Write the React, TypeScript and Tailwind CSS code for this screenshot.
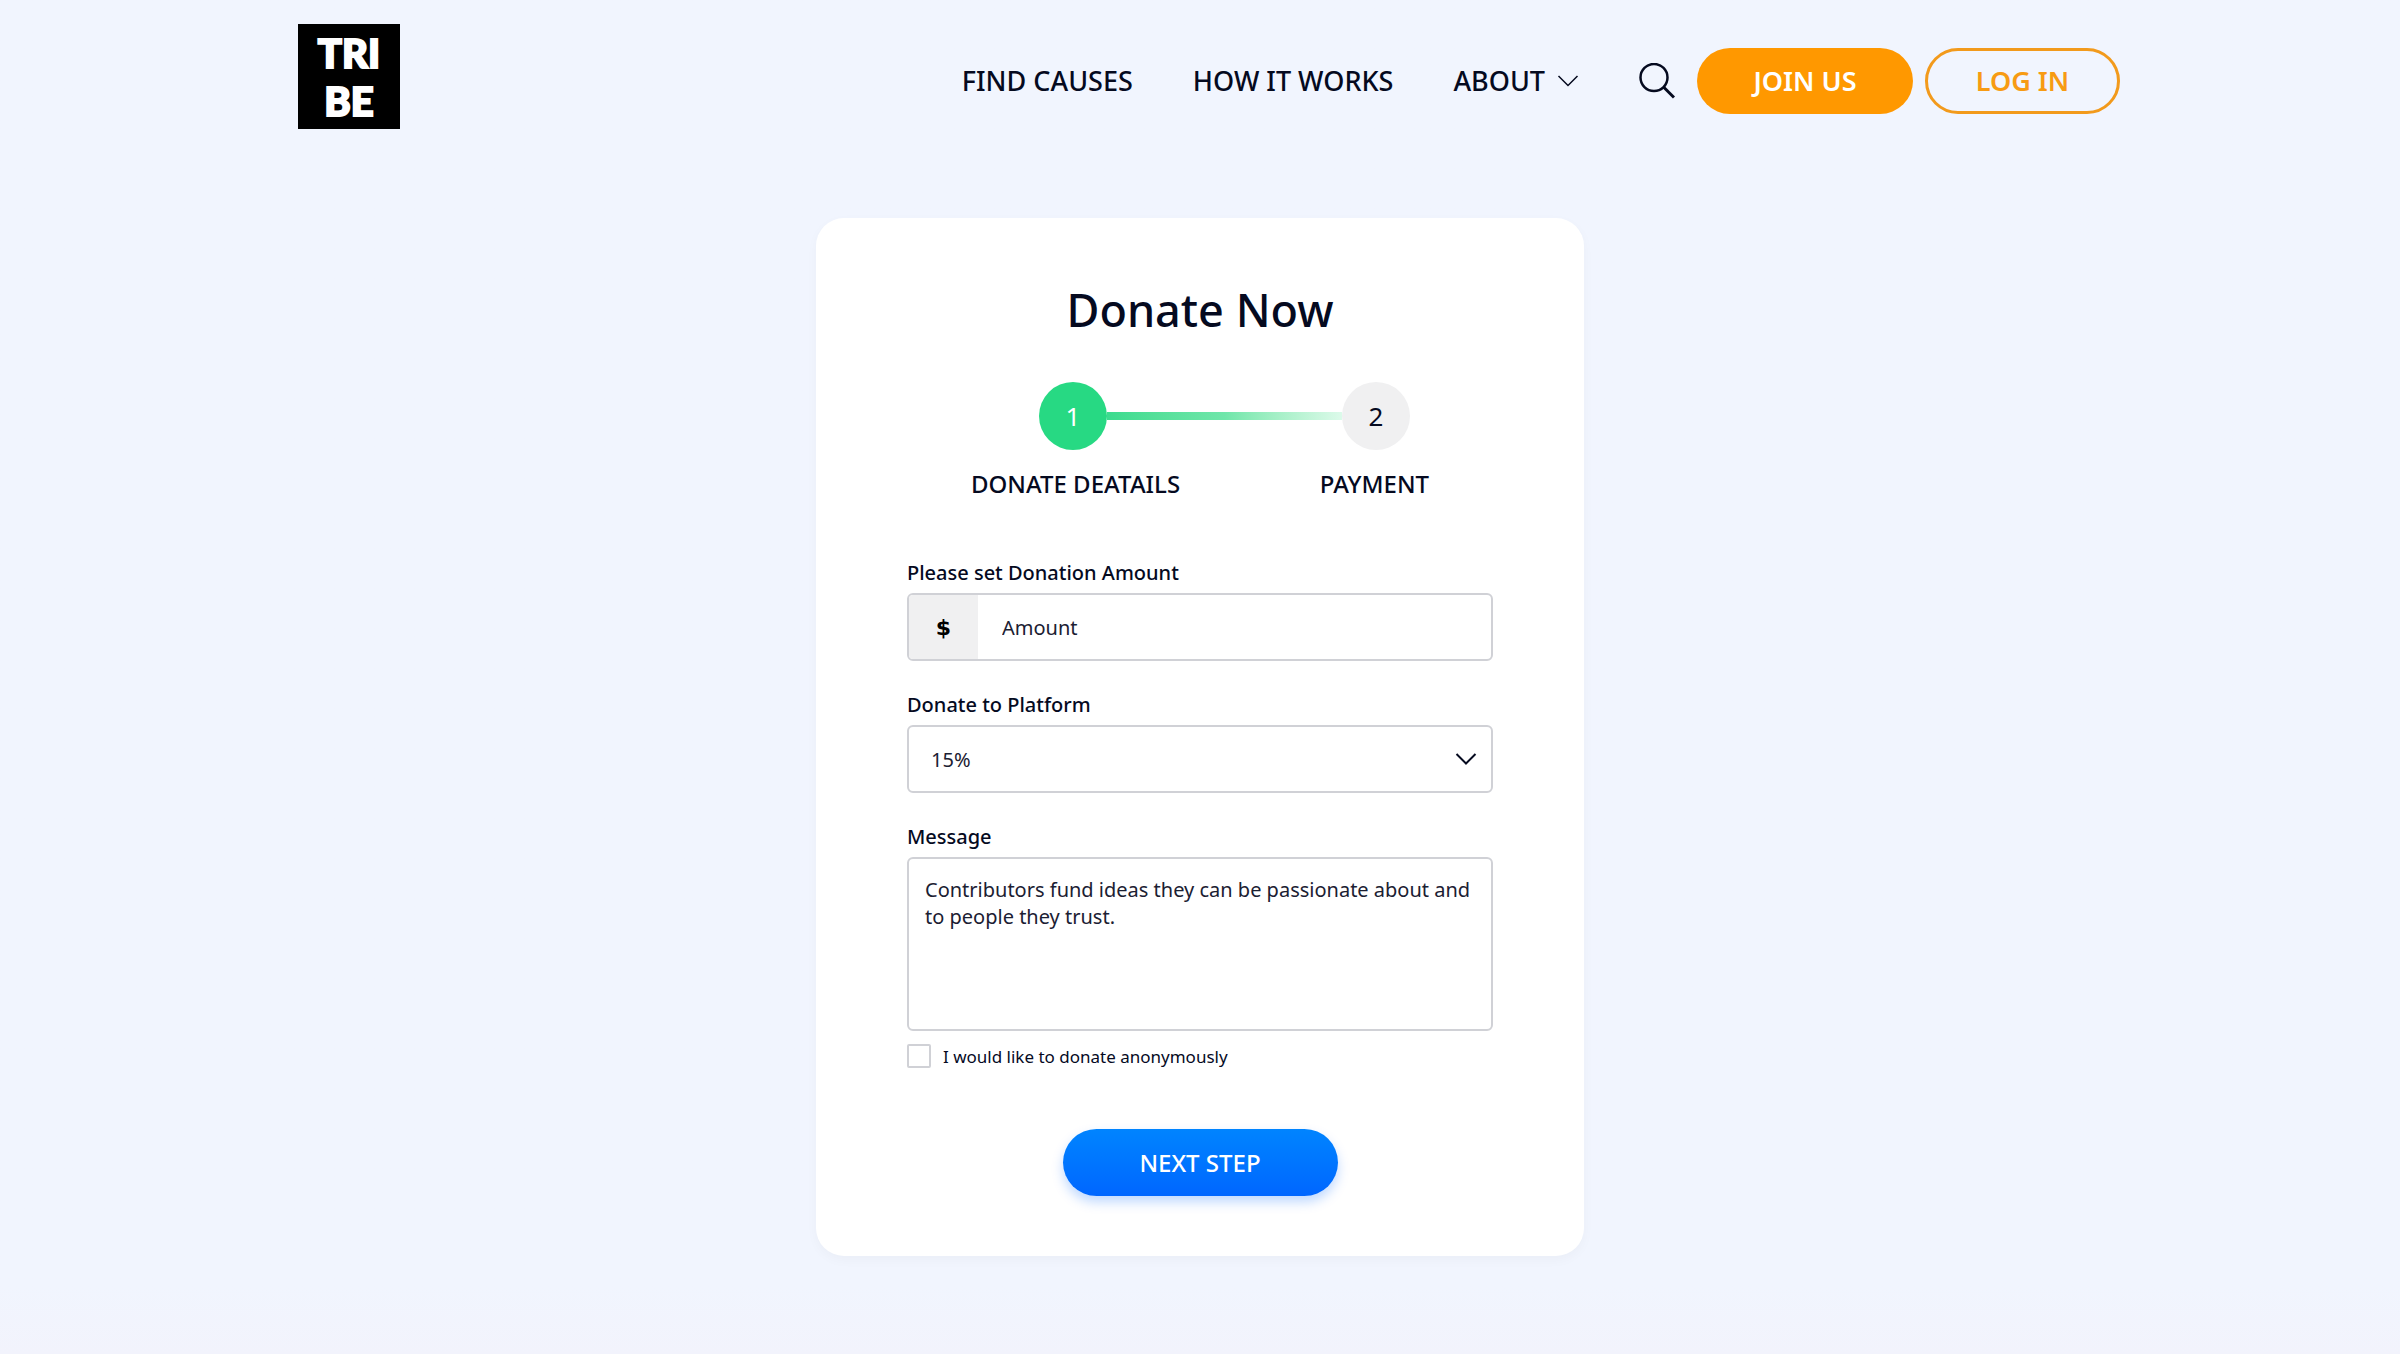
import { useState } from "react";

const navLinks = ["FIND CAUSES", "HOW IT WORKS"];
const platformShares = ["5%", "10%", "15%", "20%"];

function ChevronDown({ className }: { className?: string }) {
  return (
    <svg
      className={className}
      viewBox="0 0 22 12"
      fill="none"
      stroke="currentColor"
      aria-hidden="true"
    >
      <path d="M1.5 1 L11 10.5 L20.5 1" />
    </svg>
  );
}

function SearchIcon() {
  return (
    <svg
      className="w-9 h-9"
      viewBox="0 0 36 36"
      fill="none"
      stroke="currentColor"
      strokeWidth="2.5"
      aria-hidden="true"
    >
      <circle cx="15" cy="14.5" r="13.5" />
      <path d="M24.5 24 L35 34.5" strokeWidth="3" />
    </svg>
  );
}

function Header() {
  return (
    <header className="flex items-start justify-between pt-6 pl-[298px] pr-[280px]">
      <a
        href="#"
        className="flex flex-col items-center justify-center w-[102px] h-[105px] bg-black text-white [font-family:Lato,sans-serif] font-black text-[40px] leading-[48px] [-webkit-text-stroke:2px_white]"
      >
        <span>TRI</span>
        <span>BE</span>
      </a>
      <nav className="flex items-center mt-6 text-[27px] leading-8 font-medium">
        <div className="flex items-center gap-[60px]">
          {navLinks.map((link) => (
            <a key={link} href="#">
              {link}
            </a>
          ))}
          <button type="button" className="flex items-center gap-3">
            ABOUT
            <ChevronDown className="w-[22px] h-3 stroke-[1.5]" />
          </button>
        </div>
        <button type="button" aria-label="Search" className="ml-[60px]">
          <SearchIcon />
        </button>
        <a
          href="#"
          className="flex items-center justify-center w-[216px] h-[66px] ml-[22px] rounded-full bg-[#ff9800] text-white font-semibold"
        >
          JOIN US
        </a>
        <a
          href="#"
          className="flex items-center justify-center w-[195px] h-[66px] ml-3 rounded-full border-3 border-[#f29a1c] text-[#f79b13] font-semibold"
        >
          LOG IN
        </a>
      </nav>
    </header>
  );
}

function Steps() {
  return (
    <div className="w-[458px] mx-auto">
      <div className="flex items-center pl-[68px] pr-[19px] text-[26px]">
        <span className="flex items-center justify-center w-[68px] h-[68px] rounded-full bg-[#27d983] text-white">
          1
        </span>
        <span className="flex-1 h-2 bg-linear-to-r from-[#3bdb8e] via-[#6fe6aa] to-[#dcfaea]" />
        <span className="flex items-center justify-center w-[68px] h-[68px] rounded-full bg-[#f0f0f1]">
          2
        </span>
      </div>
      <div className="flex justify-between mt-5 text-[24px] leading-7 font-medium">
        <span>DONATE DEATAILS</span>
        <span>PAYMENT</span>
      </div>
    </div>
  );
}

export default function App() {
  const [amount, setAmount] = useState("");
  const [share, setShare] = useState("15%");
  const [message, setMessage] = useState(
    "Contributors fund ideas they can be passionate about and to people they trust."
  );
  const [anonymous, setAnonymous] = useState(false);

  return (
    <div className="min-h-screen pb-24 bg-linear-to-b from-[#f1f5fe] from-95% to-[#f2f3fc] text-[#050a1f] font-['Noto_Sans',sans-serif]">
      <Header />
      <main className="max-w-[768px] mx-auto mt-[89px] px-[91px] pt-16 pb-[60px] rounded-[28px] bg-white shadow-[0_4px_12px_rgba(0,0,0,0.03)]">
        <h1 className="mb-11 text-center text-[45px] leading-[56px] font-medium">
          Donate Now
        </h1>
        <Steps />
        <form
          className="flex flex-col mt-[61px] text-[20px] leading-[27px]"
          onSubmit={(e) => e.preventDefault()}
        >
          <label htmlFor="amount" className="mb-[7px] font-medium">
            Please set Donation Amount
          </label>
          <div className="flex h-[68px] mb-[30px] rounded-md border-2 border-[#d0d1d6] overflow-hidden">
            <span className="flex items-center justify-center w-[69px] bg-[#f0f0f1] text-black text-[22px] [font-family:'DejaVu_Sans',sans-serif] font-bold">
              $
            </span>
            <input
              id="amount"
              type="text"
              placeholder="Amount"
              value={amount}
              onChange={(e) => setAmount(e.target.value)}
              className="flex-1 min-w-0 px-6 outline-none placeholder:text-[#1b2032]"
            />
          </div>

          <label htmlFor="share" className="mb-[7px] font-medium">
            Donate to Platform
          </label>
          <div className="relative mb-[30px]">
            <select
              id="share"
              value={share}
              onChange={(e) => setShare(e.target.value)}
              className="w-full h-[68px] px-[22px] rounded-md border-2 border-[#d0d1d6] bg-white text-[#1b2032] appearance-none outline-none"
            >
              {platformShares.map((value) => (
                <option key={value}>{value}</option>
              ))}
            </select>
            <ChevronDown className="absolute right-4 top-7 w-[22px] h-3 stroke-2 pointer-events-none" />
          </div>

          <label htmlFor="message" className="mb-[7px] font-medium">
            Message
          </label>
          <textarea
            id="message"
            value={message}
            onChange={(e) => setMessage(e.target.value)}
            className="h-[174px] px-4 py-[17px] rounded-md border-2 border-[#d0d1d6] text-[#1b2032] resize-none outline-none"
          />

          <label className="flex items-center gap-3 h-6 mt-[13px] text-[17px]">
            <input
              type="checkbox"
              checked={anonymous}
              onChange={(e) => setAnonymous(e.target.checked)}
              className="w-6 h-6 rounded-xs border-2 border-[#d0d1d6] appearance-none checked:bg-[#0078ff]"
            />
            I would like to donate anonymously
          </label>

          <button
            type="submit"
            className="self-center w-[275px] h-[67px] mt-[61px] rounded-full bg-linear-to-b from-[#0084ff] to-[#0066ff] text-white text-[24px] font-medium shadow-[0_6px_12px_rgba(0,102,255,0.25)]"
          >
            NEXT STEP
          </button>
        </form>
      </main>
    </div>
  );
}
